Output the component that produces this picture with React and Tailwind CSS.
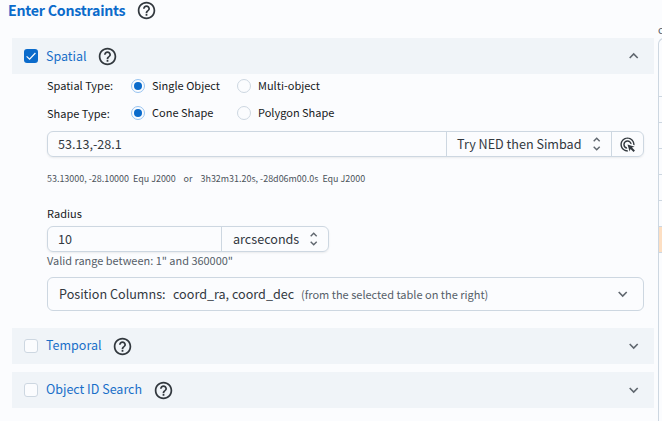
import { MdHelpOutline, MdAdsClick } from "react-icons/md";

function Chevron({ up }) {
  return (
    <svg width="11" height="8" viewBox="0 0 11 8" fill="none" stroke="#5f666e" strokeWidth="1.6">
      <path d={up ? "M1.7 6L5.7 2L9.7 6" : "M1.7 2L5.7 6L9.7 2"} />
    </svg>
  );
}

function UnfoldIcon() {
  return (
    <svg width="9" height="14" viewBox="0 0 9 14" className="shrink-0" fill="none" stroke="#5f666e" strokeWidth="1.4">
      <path d="M1.7 4.2L4.7 1.2L7.7 4.2M1.7 9.8L4.7 12.8L7.7 9.8" />
    </svg>
  );
}

function Checkbox({ checked }) {
  return (
    <span
      className={
        checked
          ? "flex size-3.5 rounded-[3px] bg-[#0b6bcb]"
          : "flex size-3.5 rounded-[3px] border border-[#cdd7e1] bg-[#fbfcfe]"
      }
    >
      {checked && (
        <svg width="14" height="14" viewBox="0 0 14 14" fill="none" stroke="#fbfcfe" strokeWidth="1.2">
          <path d="M2.6 7.4L5.6 10.2L11.4 4" />
        </svg>
      )}
    </span>
  );
}

function SectionBar({ title, checked, open, titleClass }) {
  return (
    <div className="flex h-9 w-[642px] items-center bg-[#f0f4f8] pl-3 pr-[15px]">
      <Checkbox checked={checked} />
      <span className={`ml-2 text-[12.5px] text-[#1a6fc8] ${titleClass}`}>{title}</span>
      <MdHelpOutline size={21} color="#32383e" />
      <span className="ml-auto">
        <Chevron up={open} />
      </span>
    </div>
  );
}

function Radio({ label, checked, className }) {
  return (
    <span className={`flex items-center ${className}`}>
      <span
        className={`flex size-3.5 items-center justify-center rounded-full border ${
          checked ? "border-[#97c3f0]" : "border-[#cdd7e1]"
        }`}
      >
        {checked && <span className="size-2 rounded-full bg-[#0b6bcb]" />}
      </span>
      <span className="ml-[7px] pb-0.5 text-[11px]">{label}</span>
    </span>
  );
}

function ResultsEdge() {
  const rows = [26, 26, 26, 26, 26];
  return (
    <div className="ml-1 flex w-1 flex-col overflow-hidden">
      <span className="mt-[21px] h-4 text-[10.9px] leading-4 text-[#555e68]">c</span>
      <div className="mt-px w-4 flex-1 rounded-tl-md border-l border-t border-[#cdd7e1]">
        <div className="h-[58px] border-b border-[#cdd7e1]" />
        {rows.map((_, i) => (
          <div key={i} className="h-[26px] border-b border-[#cdd7e1]" />
        ))}
        <div className="h-[26px] border-b border-[#cdd7e1] bg-[#fddfc3]" />
      </div>
    </div>
  );
}

export default function App() {
  return (
    <div className="flex h-[421px] w-[662px] overflow-hidden whitespace-nowrap bg-[#fbfcfe] font-['Noto_Sans_CJK_SC','Noto_Sans',sans-serif] leading-none text-[#171a1c]">
      <div className="flex w-[654px] shrink-0 flex-col">
        <div className="flex h-[21px] items-center pl-2">
          <span className="w-[128px] pb-px text-[14.2px] font-bold tracking-[-0.24px] text-[#0b6bcb]">
            Enter Constraints
          </span>
          <MdHelpOutline size={21} color="#32383e" />
        </div>
        <div className="ml-3 mt-[17px]">
          <SectionBar title="Spatial" checked open titleClass="w-[51px]" />
        </div>

        <div className="ml-[47px] mt-[5px] flex w-[597px] flex-col">
          <div className="flex h-3.5 items-center">
            <span className="w-[84px] pb-0.5 text-[11px]">Spatial Type:</span>
            <Radio label="Single Object" checked className="w-[106px]" />
            <Radio label="Multi-object" />
          </div>
          <div className="mt-[13px] flex h-3.5 items-center">
            <span className="w-[84px] text-[11px]">Shape Type:</span>
            <Radio label="Cone Shape" checked className="w-[106px]" />
            <Radio label="Polygon Shape" />
          </div>

          <div className="mt-[11px] flex h-[26px] rounded-md border border-[#cdd7e1] text-[12.6px] text-[#32383e] shadow-[0_1px_2px_rgba(21,21,21,0.08)]">
            <div className="flex w-[398px] items-center pl-2.5">53.13,-28.1</div>
            <div className="flex w-[165px] items-center justify-between border-l border-[#cdd7e1] pl-2.5 pr-2.5">
              <span>Try NED then Simbad</span>
              <UnfoldIcon />
            </div>
            <div className="flex flex-1 items-center justify-center border-l border-[#cdd7e1]">
              <MdAdsClick size={17} color="#32383e" />
            </div>
          </div>

          <div className="mt-4 flex h-3 items-center text-[8.95px] text-[#4b535b]">
            <span className="w-[136.5px]">53.13000, -28.10000&nbsp; Equ J2000</span>
            <span className="w-[17px]">or</span>
            <span>3h32m31.20s, -28d06m00.0s&nbsp; Equ J2000</span>
          </div>

          <div className="mt-[21px] flex h-4 items-center pb-0.5 text-[11px]">Radius</div>
          <div className="mt-1 flex h-[26px] w-[282px] rounded-md border border-[#cdd7e1] text-[12.6px] text-[#32383e] shadow-[0_1px_2px_rgba(21,21,21,0.08)]">
            <div className="flex w-[173px] items-center pl-2.5">10</div>
            <div className="flex flex-1 items-center justify-between border-l border-[#cdd7e1] pl-[11px] pr-[10px]">
              <span>arcseconds</span>
              <UnfoldIcon />
            </div>
          </div>
          <div className="mt-px flex h-4 items-center pb-0.5 text-[10.95px] text-[#555e68]">
            Valid range between: 1" and 360000"
          </div>

          <div className="mt-2 flex h-[34px] items-center rounded-md border border-[#cdd7e1] pl-[11px] pr-[15px] text-[12.6px] text-[#32383e]">
            <span className="w-[114px]">Position Columns:</span>
            <span className="w-[128px]">coord_ra, coord_dec</span>
            <span className="text-[11px] text-[#555e68]">(from the selected table on the right)</span>
            <span className="ml-auto">
              <Chevron />
            </span>
          </div>
        </div>

        <div className="ml-3 mt-[17px] flex flex-col gap-2">
          <SectionBar title="Temporal" titleClass="w-[66px] pb-px" />
          <SectionBar title="Object ID Search" titleClass="w-[107px] pb-px" />
        </div>
      </div>
      <ResultsEdge />
    </div>
  );
}
